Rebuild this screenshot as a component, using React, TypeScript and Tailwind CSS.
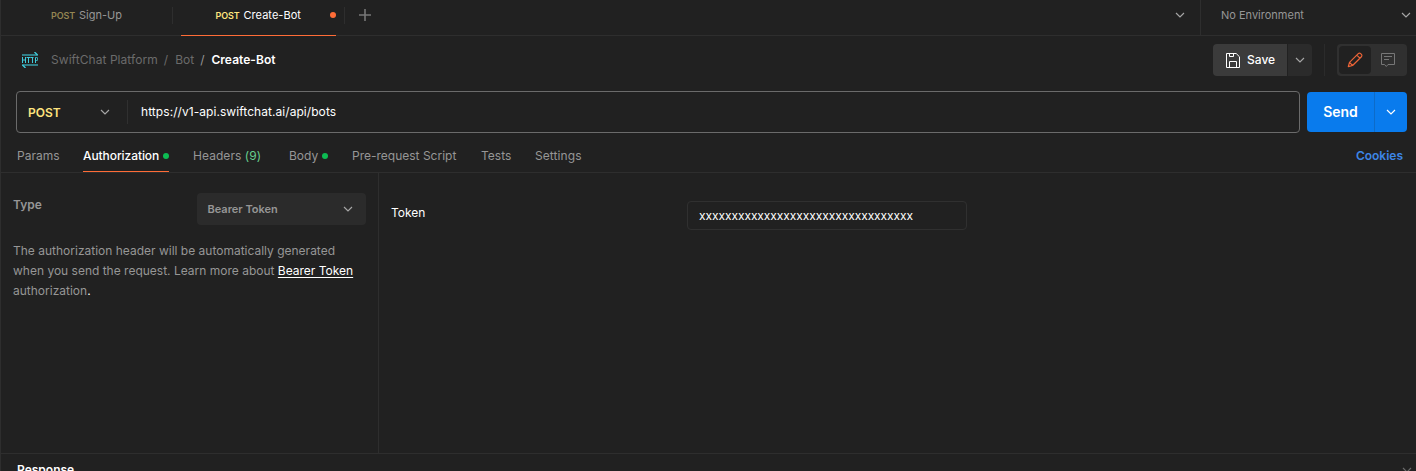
import React from 'react';

function Chevron({ className = '' }: { className?: string }) {
  return (
    <svg width="10" height="6" viewBox="0 0 10 6" fill="none" stroke="currentColor" strokeWidth="1.15" className={`shrink-0 ${className}`}>
      <path d="M1 1l4 4 4-4" />
    </svg>
  );
}

function HttpIcon() {
  return (
    <svg width="16" height="16" viewBox="0 0 16 16" fill="none" stroke="#3fcbdb" className="shrink-0">
      <path d="M0 3h16M0 13h16" strokeWidth="2" opacity=".55" />
      <path d="M12.5 0L15.5 3M3.5 16L.5 13" strokeWidth="1.4" />
      <path d="M.5 5v6M3.5 5v6M.5 8h3M4.5 5.5h4M6.5 5.5V11M8.5 5.5h3M10.5 5.5V11M13.5 11V5.5h1a1.2 1.2 0 0 1 0 3h-1" />
    </svg>
  );
}

function SaveIcon() {
  return (
    <svg width="14" height="15" viewBox="0 0 14 15" fill="none" stroke="#fff" className="shrink-0">
      <path d="M.5.5h9.7l3.3 3.3v10.7H.5zM3.5.5v3h4v-3M3.5 14.5v-6h7v6" />
    </svg>
  );
}

function PencilIcon() {
  return (
    <svg width="16" height="16" viewBox="0 0 16 16" fill="none" stroke="#ed6437" strokeWidth="1.2" strokeLinejoin="round">
      <path d="M1.3 14.7l1.2-4.3 8.8-8.8a1.6 1.6 0 0 1 2.3 0l.8.8a1.6 1.6 0 0 1 0 2.3l-8.8 8.8zM2.5 10.4l3.1 3.1M9.8 3.1l3.1 3.1" />
    </svg>
  );
}

function CommentIcon() {
  return (
    <svg width="14" height="14" viewBox="0 0 14 14" fill="none" stroke="#777">
      <path d="M.5.5h13v11H7l-1.7 2-1.8-2h-3zM3 3.5h8M3 6.5h5" />
    </svg>
  );
}

function Dot() {
  return <span className="size-1.5 shrink-0 rounded-full bg-[#0cbb52]" />;
}

function TabBar() {
  return (
    <div className="flex h-9 shrink-0 border-b border-[#2e2e2e] text-[11px] leading-[30px]">
      <div className="flex w-[171px] pl-[50px]">
        <span className="w-7 text-[9px] leading-[31px] font-semibold tracking-[-0.15px] text-[#938552]">POST</span>
        <span className="text-[#969696]">Sign-Up</span>
      </div>
      <div className="mt-[7px] h-[17px] w-px bg-[#2e2e2e]" />
      <div className="ml-2 flex h-9 w-[155px] border-b border-[#ff6c37] pl-[34.5px]">
        <span className="w-7 text-[9px] leading-[31px] font-semibold tracking-[-0.15px] text-[#ffe47e]">POST</span>
        <span className="tracking-[0.04px] text-white">Create-Bot</span>
        <span className="mt-3 ml-auto size-1.5 rounded-full bg-[#ff6c37]" />
      </div>
      <div className="mt-[7px] ml-2 h-[17px] w-px bg-[#2e2e2e]" />
      <svg width="12" height="12" viewBox="0 0 12 12" stroke="#777" strokeWidth="1.6" className="mt-[9px] ml-[14px]">
        <path d="M6 0v12M0 6h12" />
      </svg>
      <Chevron className="mt-3 mr-[15px] ml-auto text-[#a6a6a6]" />
      <div className="flex h-[35px] w-[216px] border-l border-[#2e2e2e] pl-5 text-[#969696]">
        <span>No Environment</span>
        <Chevron className="mt-3 mr-[5px] ml-auto text-[#a6a6a6]" />
      </div>
    </div>
  );
}

function TitleBar() {
  return (
    <div className="flex h-[55px] shrink-0 pt-2">
      <div className="flex h-8 items-center pl-[21px]">
        <HttpIcon />
        <span className="ml-[13px] tracking-[0.06px] text-[#6b6b6b]">SwiftChat Platform</span>
        <span className="ml-[6px] text-[#6b6b6b]">/</span>
        <span className="ml-[7px] text-[#6b6b6b]">Bot</span>
        <span className="ml-[6px] text-[#969696]">/</span>
        <span className="ml-[7px] font-semibold tracking-[0.04px] text-white">Create-Bot</span>
      </div>
      <div className="ml-auto flex h-8 pr-[9px]">
        <button className="flex w-[74px] items-center rounded-l bg-[#3b3b3b] pl-[13px] font-medium text-white">
          <SaveIcon />
          <span className="ml-[7px]">Save</span>
        </button>
        <button className="ml-px flex w-6 items-center justify-center rounded-r bg-[#2b2b2b] text-[#a6a6a6]">
          <Chevron />
        </button>
        <div className="mr-3 ml-3 w-px bg-[#2b2b2b]" />
        <div className="flex w-[70px] rounded bg-[#303030] p-[2px]">
          <div className="flex w-8 items-center justify-center rounded bg-[#212121]">
            <PencilIcon />
          </div>
          <div className="flex w-[34px] items-center justify-center">
            <CommentIcon />
          </div>
        </div>
      </div>
    </div>
  );
}

function RequestBar() {
  return (
    <div className="flex h-[42px] shrink-0 pl-[15px]">
      <div className="flex w-[1284px] rounded border border-[#6b6b6b]">
        <div className="flex w-[110px] items-center pl-[11px] font-semibold text-[#ffe47e]">
          <span className="mt-px">POST</span>
          <Chevron className="mr-[17px] ml-auto text-[#a6a6a6]" />
        </div>
        <div className="mt-2 h-6 w-px bg-[#303030]" />
        <span className="ml-[13px] leading-10 tracking-[0.06px] text-white">https://v1-api.swiftchat.ai/api/bots</span>
      </div>
      <div className="mt-px ml-[7px] flex h-10 w-[100px] rounded bg-[#097bed] text-white">
        <div className="flex w-[68px] items-center justify-center border-r border-[#0d6bc8] text-sm font-semibold">Send</div>
        <div className="flex flex-1 items-center justify-center">
          <Chevron />
        </div>
      </div>
    </div>
  );
}

function RequestTabs() {
  return (
    <div className="flex h-10 shrink-0 border-b border-[#2e2e2e] pl-4 leading-[45px] text-[#969696]">
      <span className="w-[66px]">Params</span>
      <div className="flex h-[39px] w-[86px] items-center justify-between border-b border-[#ff6c37] pt-[7px] leading-4 font-medium tracking-[-0.08px] text-white">
        Authorization
        <Dot />
      </div>
      <span className="ml-6 w-[96px] tracking-[0.06px]">
        Headers <span className="text-[#66ce8e]">(9)</span>
      </span>
      <div className="flex h-[39px] w-[63px] items-center gap-1 pt-[7px] leading-4">
        Body
        <Dot />
      </div>
      <span className="w-[129px]">Pre-request Script</span>
      <span className="w-[54px]">Tests</span>
      <span className="tracking-[0.08px]">Settings</span>
      <span className="mr-[13px] ml-auto font-semibold text-[#3d86e6]">Cookies</span>
    </div>
  );
}

function AuthPanel() {
  return (
    <div className="flex h-[280px] shrink-0">
      <div className="w-[378px] border-r border-[#2e2e2e] pt-5 pl-3 text-[#969696]">
        <div className="flex h-8 pr-3">
          <span className="leading-6 font-semibold">Type</span>
          <div className="ml-auto flex w-[169px] items-center rounded bg-[#2b2b2b] pr-[13px] pl-[10.5px] text-[11px] font-semibold">
            Bearer Token
            <Chevron className="ml-auto text-[#a6a6a6]" />
          </div>
        </div>
        <p className="mt-4 leading-5 whitespace-nowrap">
          The authorization header will be automatically generated
          <br />
          when you send the request. Learn more about{' '}
          <span className="text-white underline underline-offset-2">Bearer Token</span>
          <br />
          authorization<span className="text-white">.</span>
        </p>
      </div>
      <div className="flex flex-1 pl-3 text-white">
        <span className="mt-8 w-[296px] leading-4">Token</span>
        <div className="mt-7 flex h-[29px] w-[280px] items-center rounded border border-[#303030] pl-[11px] tracking-[-0.065px]">
          xxxxxxxxxxxxxxxxxxxxxxxxxxxxxxxxx
        </div>
      </div>
    </div>
  );
}

export default function App() {
  return (
    <div className="flex h-[471px] w-[1416px] flex-col overflow-hidden border-l border-[#2e2e2e] bg-[#212121] font-['Inter',sans-serif] text-xs">
      <TabBar />
      <TitleBar />
      <RequestBar />
      <RequestTabs />
      <AuthPanel />
      <div className="flex h-[40px] shrink-0 border-t border-[#2e2e2e] pl-4 leading-8 font-semibold text-white">
        <span>Response</span>
        <Chevron className="mt-[13px] mr-1 ml-auto text-[#6b6b6b]" />
      </div>
    </div>
  );
}
